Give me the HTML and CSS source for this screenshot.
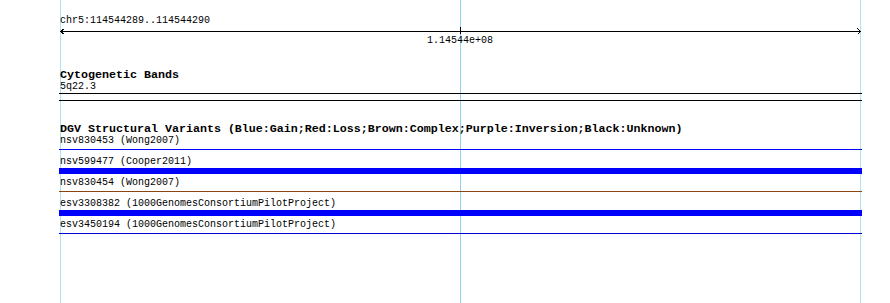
FILE: index.html
```html
<!DOCTYPE html>
<html lang="en">
  <head>
    <meta charset="utf-8">
    <title>chr5:114544289..114544290</title>
    <link rel="stylesheet" href="styles.css">
  </head>
  <body>
    <div class="browser">
      <div class="ruler">
        <div class="ruler-title">chr5:114544289..114544290</div>
        <svg class="ruler-axis" width="803" height="8" viewBox="0 0 803 8">
          <rect x="1" y="4" width="801" height="1" fill="#000"/>
          <polyline points="5.5,1.5 1.5,4.5 5.5,7.5" fill="none" stroke="#000" stroke-width="1"/>
          <polyline points="798.5,1.5 801.5,4.5 798.5,7.5" fill="none" stroke="#000" stroke-width="1"/>
          <rect x="401" y="0" width="1" height="7" fill="#000"/>
        </svg>
        <div class="ruler-label">1.14544e+08</div>
      </div>

      <div class="track track-bands">
        <div class="track-title">Cytogenetic Bands</div>
        <div class="feature-label">5q22.3</div>
        <div class="band"></div>
      </div>

      <div class="track track-dgv">
        <div class="track-title">DGV Structural Variants (Blue:Gain;Red:Loss;Brown:Complex;Purple:Inversion;Black:Unknown)</div>
        <div class="feature">
          <div class="feature-label">nsv830453 (Wong2007)</div>
          <div class="glyph glyph-line gain"></div>
        </div>
        <div class="feature">
          <div class="feature-label">nsv599477 (Cooper2011)</div>
          <div class="glyph glyph-box gain"></div>
        </div>
        <div class="feature">
          <div class="feature-label">nsv830454 (Wong2007)</div>
          <div class="glyph glyph-line complex"></div>
        </div>
        <div class="feature">
          <div class="feature-label">esv3308382 (1000GenomesConsortiumPilotProject)</div>
          <div class="glyph glyph-box gain"></div>
        </div>
        <div class="feature">
          <div class="feature-label">esv3450194 (1000GenomesConsortiumPilotProject)</div>
          <div class="glyph glyph-line gain-dark"></div>
        </div>
      </div>
    </div>
  </body>
</html>
```

FILE: styles.css
```css
html {
  height: 100%;
}

body {
  margin: 0;
  min-height: 100%;
  color: #000000;
  font-family: "Liberation Mono", "DejaVu Sans Mono", monospace;
  font-size: 10px;
  line-height: 12px;
  background-color: #FFFFFF;
  /* grid lines behind the tracks */
  background-image:
    linear-gradient(#A8E6F2, #A8E6F2),
    linear-gradient(#8FD2EE, #8FD2EE),
    linear-gradient(#A8E6F2, #A8E6F2);
  background-size: 1px 100%;
  background-position: 60px 0, 460px 0, 860px 0;
  background-repeat: no-repeat;
}

.browser {
  width: 803px;
  margin-left: 59px;
  padding-top: 15px;
}

.ruler-title,
.feature-label,
.track-title {
  padding-left: 1px;
  white-space: nowrap;
}

.ruler-axis {
  display: block;
  shape-rendering: crispEdges;
}

.ruler-label {
  width: 800px;
  padding-left: 1px;
  text-align: center;
}

.track {
  margin-top: 22px;
}

.track-title {
  font-size: 11.67px;
  font-weight: bold;
  line-height: 12px;
}

.band {
  height: 6px;
  border-top: 1px solid #000000;
  border-bottom: 1px solid #000000;
}

.feature {
  height: 21px;
}

.glyph-line {
  height: 1px;
  margin-top: 2px;
}

.glyph-box {
  height: 6px;
}

.gain {
  background: #0000FF;
}

.gain-dark {
  background: #0000D8;
}

.complex {
  background: #8B4513;
}
```
